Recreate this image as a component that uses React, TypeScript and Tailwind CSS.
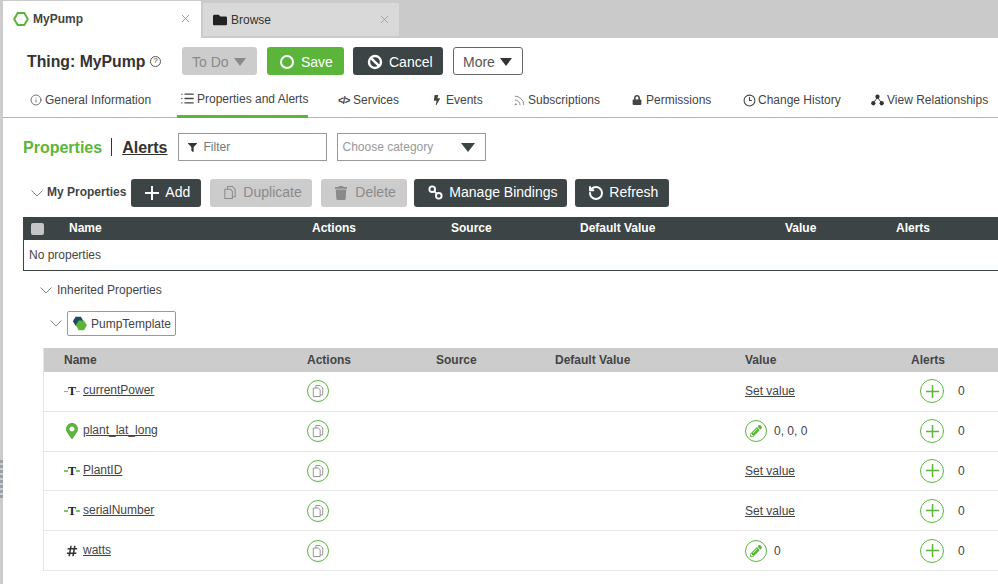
import type { ReactNode } from 'react';
import { Clock3, Info, List, RotateCcw, Rss, X } from 'lucide-react';
import { FaBolt, FaFilter, FaFolder, FaHashtag, FaLock, FaMapMarkerAlt, FaPencilAlt, FaTrash } from 'react-icons/fa';

const navTabs = [
  { label: 'General Information', icon: <Info className="h-[12px] w-[12px]" strokeWidth={1.5} />, width: 'w-[150px]', slot: 'w-[15px]' },
  { label: 'Properties and Alerts', icon: <List className="h-[15px] w-[15px]" strokeWidth={2.2} />, width: 'w-[158px]', slot: 'w-[17px]', active: true },
  { label: 'Services', icon: <span className="text-[10px] font-bold tracking-[-1px]">&lt;/&gt;</span>, width: 'w-[94px]', slot: 'w-[15px]' },
  { label: 'Events', icon: <FaBolt className="ml-[1px] h-[10px] w-[8px]" />, width: 'w-[81px]', slot: 'w-[14px]' },
  { label: 'Subscriptions', icon: <Rss className="h-[13px] w-[13px] text-[#777]" strokeWidth={1.5} />, width: 'w-[119px]', slot: 'w-[15px]' },
  { label: 'Permissions', icon: <FaLock className="h-[10px] w-[10px]" />, width: 'w-[111px]', slot: 'w-[14px]' },
  { label: 'Change History', icon: <Clock3 className="h-[13px] w-[13px]" strokeWidth={2} />, width: 'w-[128px]', slot: 'w-[15px]' },
  { label: 'View Relationships', icon: <RelIcon />, width: 'w-[120px]', slot: 'w-[16px]' },
];

const rows = [
  { name: 'currentPower', type: 'text', value: null },
  { name: 'plant_lat_long', type: 'pin', value: '0, 0, 0' },
  { name: 'PlantID', type: 'text', value: null },
  { name: 'serialNumber', type: 'text', value: null },
  { name: 'watts', type: 'num', value: '0' },
];

function RelIcon() {
  return (
    <svg viewBox="0 0 14 12" className="h-[12px] w-[13px]" fill="#333">
      <circle cx="7" cy="2.5" r="2.3" />
      <circle cx="2.5" cy="9.5" r="2.3" />
      <circle cx="11.5" cy="9.5" r="2.3" />
      <path d="M7 3 2.5 9.5M7 3l4.5 6.5" stroke="#333" strokeWidth="1" />
    </svg>
  );
}

function HexIcon({ className }: { className?: string }) {
  return (
    <svg viewBox="0 0 16 16" className={className} fill="none">
      <path d="M4.7 2h6.6L14.8 8l-3.5 6H4.7L1.2 8z" stroke="#5bb53b" strokeWidth="2" />
    </svg>
  );
}

function TemplateIcon() {
  return (
    <svg viewBox="0 0 18 16" className="h-[15px] w-[16px]">
      <path d="M4 0.5h6l3 5-3 5H4l-3-5z" fill="#1f4a63" />
      <path d="M7.5 4.5h6l3.2 5.5-3.2 5.5h-6L4.3 10z" fill="#5bb53b" />
    </svg>
  );
}

function CopyIcon({ className }: { className?: string }) {
  return (
    <svg viewBox="0 0 14 16" className={className} fill="none" stroke="currentColor" strokeWidth="1.1">
      <path d="M1.5 4.5h6l2 2v8h-8z" />
      <path d="M4.5 4.5v-3h5l3 3v8h-3" />
    </svg>
  );
}

function LinkIcon() {
  return (
    <svg viewBox="0 0 16 16" className="h-[15px] w-[15px]" fill="none" stroke="currentColor" strokeWidth="2">
      <circle cx="4.5" cy="4.5" r="3" />
      <circle cx="11.5" cy="11.5" r="3" />
      <path d="M6.5 6.5l3 3" />
    </svg>
  );
}

function BanIcon() {
  return (
    <svg viewBox="0 0 16 16" className="h-[16px] w-[16px]" fill="none" stroke="currentColor" strokeWidth="2.4">
      <circle cx="8" cy="8" r="6" />
      <path d="M3.8 3.8l8.4 8.4" />
    </svg>
  );
}

function PlusGlyph({ className, width }: { className: string; width: number }) {
  return (
    <svg viewBox="0 0 16 16" className={className} fill="none" stroke="currentColor" strokeWidth={width}>
      <path d="M8 1v14M1 8h14" />
    </svg>
  );
}

function Chevron({ className }: { className?: string }) {
  return (
    <svg viewBox="0 0 12 7" className={`h-[7px] w-[12px] text-[#777] ${className ?? ''}`} fill="none" stroke="currentColor" strokeWidth="0.9">
      <path d="M0.5 0.5 6 6l5.5-5.5" />
    </svg>
  );
}

function TextTypeIcon() {
  return (
    <span className="flex w-[16px] items-center">
      <span className="h-[1.5px] w-[4px] bg-[#7dc463]" />
      <span className="font-['Liberation_Serif',serif] text-[12px] leading-none font-bold text-[#222]">T</span>
      <span className="h-[1.5px] w-[4px] bg-[#7dc463]" />
    </span>
  );
}

function Caret({ className }: { className: string }) {
  return <span className={`h-0 w-0 border-x-[6.5px] border-t-[8px] border-x-transparent ${className}`} />;
}

function Btn({ children, tone, className }: { children: ReactNode; tone: 'dark' | 'off' | 'green'; className: string }) {
  const tones = {
    dark: 'bg-[#3c4445] text-white',
    off: 'bg-[#cccccc] text-[#8a8a8a]',
    green: 'bg-[#5bb53b] text-white',
  };
  return <div className={`flex h-[28px] shrink-0 items-center rounded-[3px] text-[14px] ${tones[tone]} ${className}`}>{children}</div>;
}

function RoundIcon({ children }: { children: ReactNode }) {
  return <span className="flex h-[22px] w-[22px] items-center justify-center rounded-full border border-[#5bb53b] text-[#5bb53b]">{children}</span>;
}

export default function App() {
  return (
    <div className="h-[584px] w-[998px] overflow-hidden bg-white font-['Liberation_Sans',Arial,sans-serif] text-[#333]">
      <div className="relative h-full border-l-[3px] border-[#cccccc]">
        <div className="absolute top-[460px] left-[-3px] flex h-[42px] w-[3px] flex-col gap-[2px]">
          {[0, 1, 2, 3, 4, 5, 6, 7].map((i) => <span key={i} className="h-[3px] w-[3px] bg-[#9aa0a8]" />)}
        </div>

        {/* tab strip */}
        <div className="flex h-[38px] bg-[#cacaca]">
          <div className="mt-[1px] flex w-[198px] items-center bg-white pr-[9px] pb-[2px] pl-[10px]">
            <HexIcon className="h-[16px] w-[16px]" />
            <span className="ml-[4px] flex-1 text-[12px] font-bold text-[#444]">MyPump</span>
            <X className="h-[13px] w-[13px] text-[#888]" strokeWidth={1.5} />
          </div>
          <div className="mt-[3px] ml-[2px] flex h-[33px] w-[196px] items-center bg-[#d9d9d9] pr-[8px] pl-[9px]">
            <FaFolder className="h-[14px] w-[16px] text-[#222]" />
            <span className="ml-[3px] flex-1 text-[12px] text-[#333]">Browse</span>
            <X className="h-[13px] w-[13px] text-[#999]" strokeWidth={1.5} />
          </div>
        </div>

        {/* title row */}
        <div className="mt-[9px] flex h-[28px] items-center pl-[24px]">
          <span className="w-[119px] shrink-0 pt-[2px] text-[15.8px] font-bold whitespace-nowrap text-[#333]">Thing: MyPump</span>
          <span className="ml-[4px] flex h-[11px] w-[11px] shrink-0 items-center justify-center rounded-full border border-[#555] text-[8px]">?</span>
          <Btn tone="off" className="ml-[21px] w-[75px] gap-[5px] pt-[2px] pl-[10px]">To Do <Caret className="border-t-[#8a8a8a]" /></Btn>
          <Btn tone="green" className="ml-[10px] w-[77px] gap-[7px] pt-[2px] pl-[13px]">
            <span className="h-[14px] w-[14px] rounded-full border-2 border-white" /> Save
          </Btn>
          <Btn tone="dark" className="ml-[9px] w-[90px] gap-[6px] pt-[2px] pl-[14px]"><BanIcon /> Cancel</Btn>
          <div className="ml-[10px] flex h-[28px] w-[70px] items-center gap-[5px] rounded-[3px] border border-[#666] pt-[2px] pl-[9px] text-[14px] text-[#555]">
            More <Caret className="border-t-[#333]" />
          </div>
        </div>

        {/* nav tabs */}
        <div className="mt-[8px] flex h-[35px] items-stretch border-b border-[#b5b5b5] pl-[28px]">
          {navTabs.map((t) => (
            <div key={t.label} className={`${t.width} shrink-0`}>
              <div className={`flex h-[35px] items-center pt-[1px] pb-[2px] text-[12px] whitespace-nowrap text-[#444] ${t.active ? 'ml-[-4px] w-[131px] border-b-[3px] border-[#5bb53b] pl-[4px]' : ''}`}>
                <span className={`ml-[-1px] flex shrink-0 items-center ${t.slot}`}>{t.icon}</span>
                <span>{t.label}</span>
              </div>
            </div>
          ))}
        </div>

        {/* properties / filter */}
        <div className="mt-[15px] flex h-[28px] items-center pl-[20px]">
          <span className="pt-[1px] text-[16px] font-bold text-[#5bb53b]">Properties</span>
          <span className="mr-[10px] ml-[9px] h-[18px] w-px bg-[#333]" />
          <span className="pt-[1px] text-[16px] font-bold text-[#333] underline">Alerts</span>
          <div className="ml-[10px] flex h-[28px] w-[149px] items-center border border-[#999] pl-[9px] text-[12px] text-[#777]">
            <FaFilter className="h-[9px] w-[9px] text-[#333]" />
            <span className="ml-[7px]">Filter</span>
          </div>
          <div className="ml-[10px] flex h-[28px] w-[149px] items-center justify-between border border-[#999] pr-[10px] pl-[5px] text-[12px] text-[#999]">
            Choose category
            <Caret className="border-x-[7px] border-t-[9px] border-t-[#3c4445]" />
          </div>
        </div>

        {/* my properties */}
        <div className="mt-[18px] flex h-[28px] items-center pl-[28px]">
          <Chevron />
          <span className="ml-[4px] pb-[2px] text-[12px] font-bold text-[#444]">My Properties</span>
          <Btn tone="dark" className="ml-[5px] w-[70px] gap-[5px] pb-[1px] pl-[13px]"><PlusGlyph className="h-[16px] w-[16px]" width={2} /> Add</Btn>
          <Btn tone="off" className="ml-[9px] w-[102px] gap-[6px] pb-[1px] pl-[13px]"><CopyIcon className="h-[15px] w-[14px]" /> Duplicate</Btn>
          <Btn tone="off" className="ml-[9px] w-[86px] gap-[7px] pb-[1px] pl-[13px]"><FaTrash className="h-[14px] w-[14px]" /> Delete</Btn>
          <Btn tone="dark" className="ml-[7px] w-[153px] gap-[6px] pb-[1px] pl-[14px]"><LinkIcon /> Manage Bindings</Btn>
          <Btn tone="dark" className="ml-[8px] w-[94px] gap-[5px] pb-[1px] pl-[13px]"><RotateCcw className="h-[16px] w-[16px]" strokeWidth={3} /> Refresh</Btn>
        </div>

        {/* my properties table */}
        <div className="mt-[10px] ml-[20px] w-[990px] border-b border-l border-[#3c4445]">
          <div className="relative grid h-[23px] grid-cols-[243px_139px_129px_205px_111px_1fr] items-center bg-[#3c4445] pb-[1px] pl-[45px] text-[12px] font-bold text-white">
            <span className="absolute left-[7px] h-[12px] w-[13px] rounded-[2px] bg-[#c4c6c6]" />
            <span>Name</span>
            <span>Actions</span>
            <span>Source</span>
            <span>Default Value</span>
            <span>Value</span>
            <span>Alerts</span>
          </div>
          <div className="flex h-[30px] items-center pl-[5px] text-[12px] text-[#444]">No properties</div>
        </div>

        {/* inherited */}
        <div className="mt-[9px] flex h-[20px] items-center pl-[37px] text-[12px] text-[#444]">
          <Chevron />
          <span className="ml-[5px]">Inherited Properties</span>
        </div>
        <div className="mt-[11px] flex h-[25px] items-center pl-[47px]">
          <Chevron />
          <div className="ml-[5px] flex h-[25px] w-[109px] items-center gap-[3px] rounded-[2px] border border-[#999] pl-[4px] text-[12px] text-[#444]">
            <TemplateIcon /> PumpTemplate
          </div>
        </div>

        {/* inherited table */}
        <div className="mt-[12px] ml-[40px] w-[970px] border-l border-[#e4e4e4]">
          <div className="grid h-[24px] grid-cols-[243px_129px_119px_190px_166px_1fr] items-center bg-[#cccccc] pb-[1px] pl-[20px] text-[12px] font-bold text-[#444]">
            <span>Name</span>
            <span>Actions</span>
            <span>Source</span>
            <span>Default Value</span>
            <span>Value</span>
            <span>Alerts</span>
          </div>
          {rows.map((r) => (
            <div key={r.name} className="grid h-[39.8px] grid-cols-[243px_129px_119px_190px_166px_1fr] items-center border-b border-[#e6e6e6] pl-[20px] text-[12px] text-[#444]">
              <div className="flex items-center">
                <span className="flex w-[19px] items-center">
                  {r.type === 'text' && <TextTypeIcon />}
                  {r.type === 'pin' && <FaMapMarkerAlt className="ml-[2px] h-[16px] w-[12px] text-[#5bb53b]" />}
                  {r.type === 'num' && <FaHashtag className="ml-[2px] h-[12px] w-[12px] text-[#333]" />}
                </span>
                <span className="mb-[2px] underline">{r.name}</span>
              </div>
              <div><RoundIcon><CopyIcon className="h-[14px] w-[12px] text-[#8f8f8f]" /></RoundIcon></div>
              <div />
              <div />
              <div className="flex items-center gap-[7px]">
                {r.value ? (
                  <>
                    <RoundIcon><FaPencilAlt className="h-[12px] w-[12px]" /></RoundIcon>
                    <span>{r.value}</span>
                  </>
                ) : (
                  <span className="underline">Set value</span>
                )}
              </div>
              <div className="ml-[9px] flex items-center gap-[14px]">
                <span className="flex h-[24px] w-[24px] items-center justify-center rounded-full border border-[#5bb53b] text-[#5bb53b]">
                  <PlusGlyph className="h-[15px] w-[15px]" width={1.6} />
                </span>
                <span>0</span>
              </div>
            </div>
          ))}
        </div>
      </div>
    </div>
  );
}
